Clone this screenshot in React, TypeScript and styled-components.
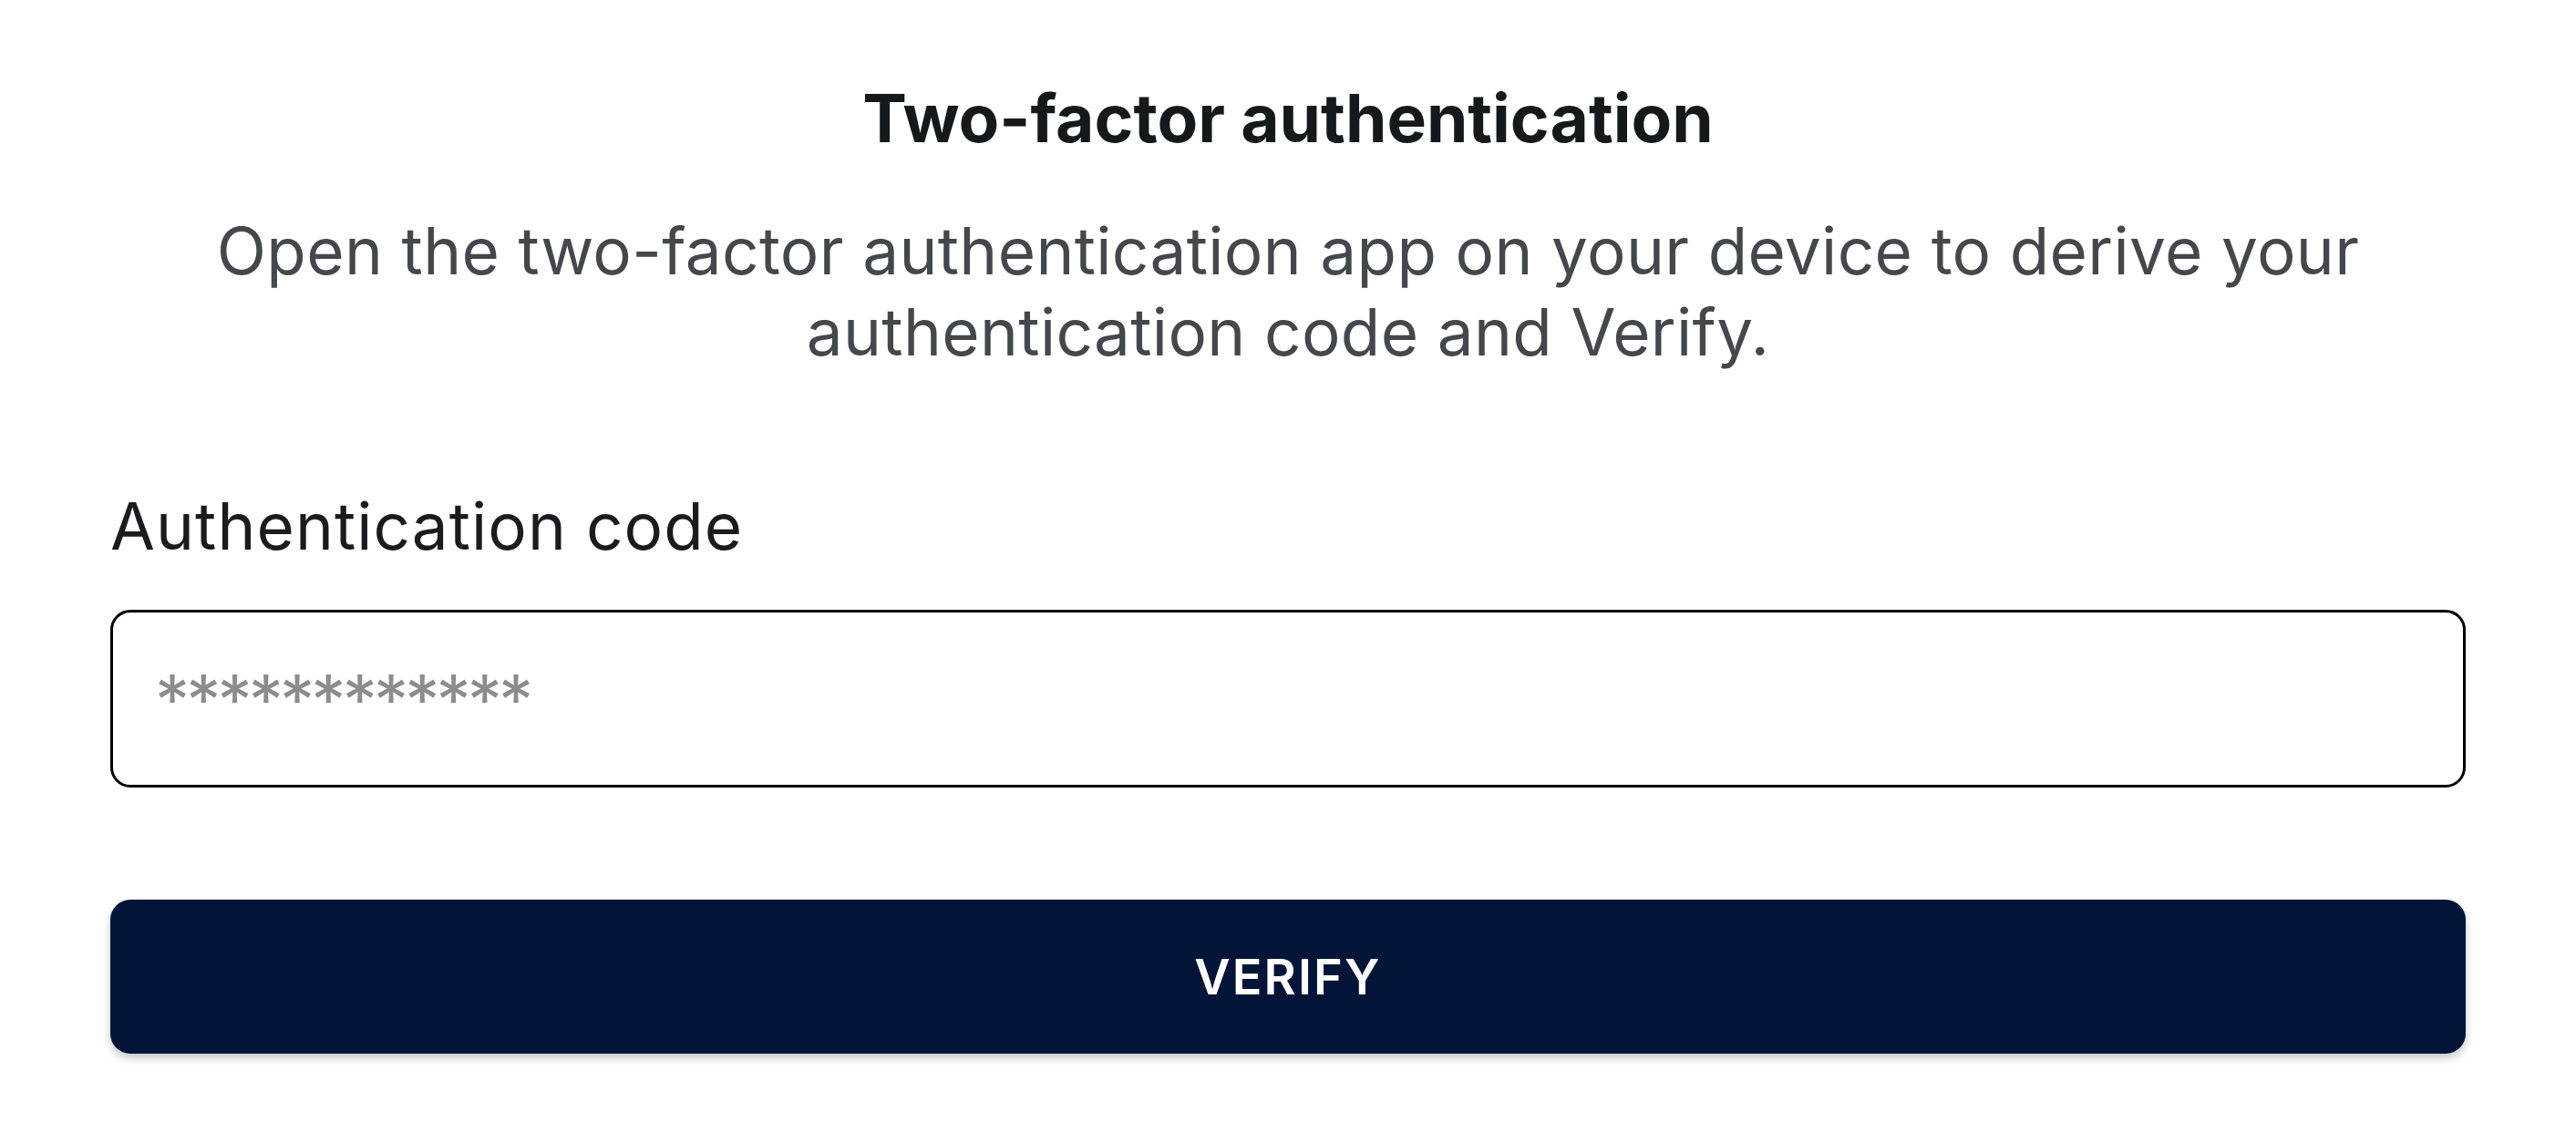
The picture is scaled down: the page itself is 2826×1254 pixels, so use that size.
import React from "react";
import styled, { createGlobalStyle } from "styled-components";

const GlobalStyle = createGlobalStyle`
  html, body {
    margin: 0;
    padding: 0;
    background: #ffffff;
  }
  body {
    font-family: Inter, "Noto Sans", "Liberation Sans", sans-serif;
  }
  * { box-sizing: border-box; }
`;

const Page = styled.main`
  display: flex;
  flex-direction: column;
  align-items: stretch;
  padding: 86px 121px 80px;
  background: #ffffff;
`;

const Title = styled.h1`
  margin: 0;
  text-align: center;
  font-family: Inter, "Noto Sans", sans-serif;
  font-size: 73px;
  line-height: 88px;
  font-weight: 700;
  letter-spacing: 0;
  color: #17181a;
`;

const Lead = styled.p`
  margin: 57px 0 0;
  text-align: center;
  font-family: Inter, "Noto Sans", sans-serif;
  font-size: 71px;
  line-height: 89px;
  font-weight: 400;
  letter-spacing: 0.005em;
  color: #46474b;
`;

const Form = styled.form`
  display: flex;
  flex-direction: column;
  margin-top: 124px;
`;

const Label = styled.label`
  font-family: Inter, "Noto Sans", sans-serif;
  font-size: 71px;
  line-height: 88px;
  font-weight: 400;
  letter-spacing: 0.015em;
  color: #1b1b1d;
`;

const CodeInput = styled.input`
  margin-top: 48px;
  height: 195px;
  width: 100%;
  padding: 0 46px;
  border: 3px solid #000000;
  border-radius: 22px;
  background: #ffffff;
  font-family: Inter, "Noto Sans", sans-serif;
  font-size: 76px;
  letter-spacing: -0.05em;
  color: #1b1b1d;
  outline: none;

  &::placeholder {
    color: #8c8c8c;
  }
`;

const VerifyButton = styled.button`
  margin-top: 123px;
  height: 169px;
  width: 100%;
  border: none;
  border-radius: 22px;
  background: #021539;
  color: #ffffff;
  font-family: Inter, "Noto Sans", sans-serif;
  font-size: 54px;
  font-weight: 600;
  letter-spacing: 0.04em;
  text-transform: uppercase;
  box-shadow: 0 5px 10px rgba(0, 0, 0, 0.22);
  cursor: pointer;
`;

export default function App() {
  return (
    <>
      <GlobalStyle />
      <Page>
        <Title>Two-factor authentication</Title>
        <Lead>
          Open the two-factor authentication app on your device to derive your
          <br />
          authentication code and Verify.
        </Lead>
        <Form onSubmit={(e) => e.preventDefault()}>
          <Label htmlFor="code">Authentication code</Label>
          <CodeInput id="code" type="text" placeholder="************" />
          <VerifyButton type="submit">Verify</VerifyButton>
        </Form>
      </Page>
    </>
  );
}
